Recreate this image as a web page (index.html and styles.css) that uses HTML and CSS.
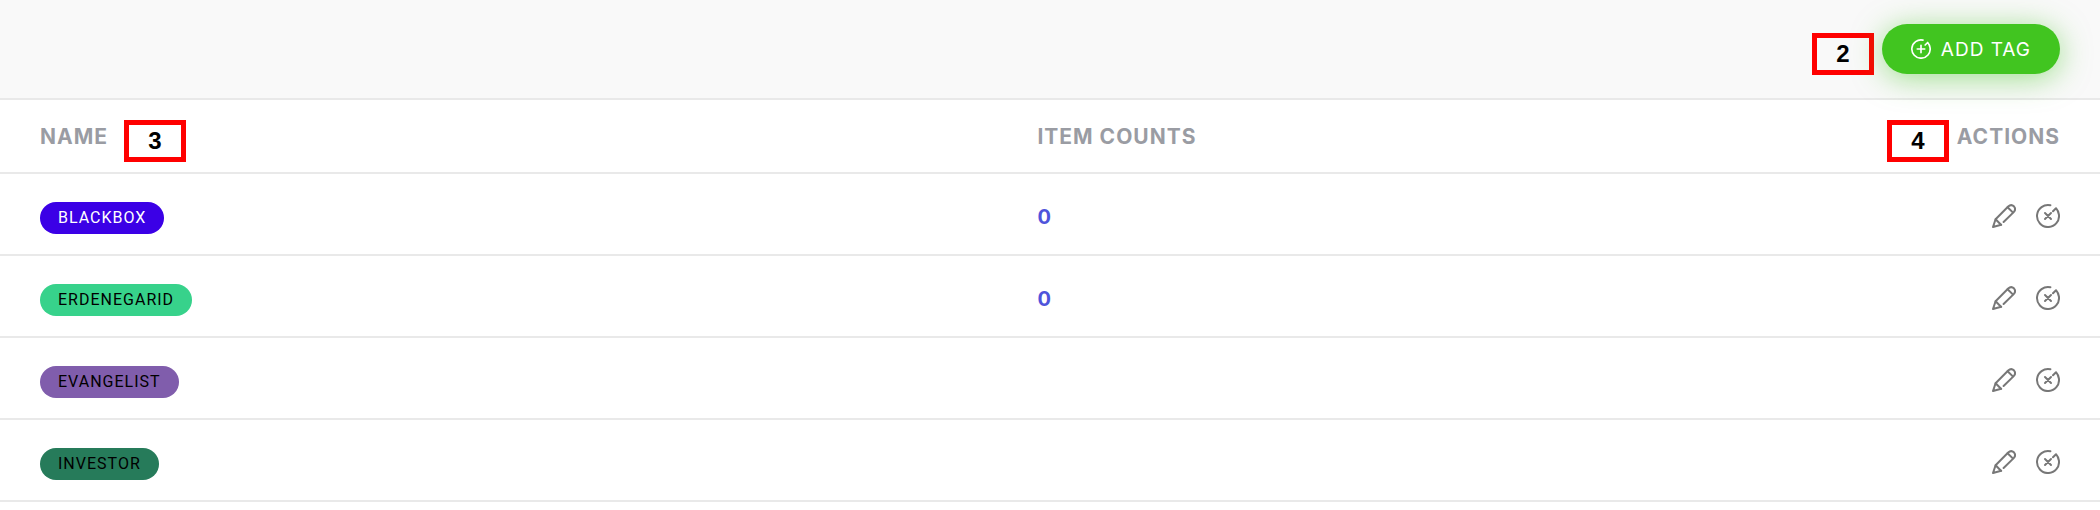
FILE: index.html
```html
<!DOCTYPE html>
<html lang="en">
<head>
  <meta charset="UTF-8">
  <meta name="viewport" content="width=device-width, initial-scale=1.0">
  <title>Tags</title>
  <link rel="stylesheet" href="styles.css">
</head>
<body>
  <svg class="sprite" aria-hidden="true">
    <symbol id="icon-add" viewBox="0 0 24 24">
      <path d="M14.4 1.3A11 11 0 1 0 22.9 10.5Q22.3 6.8 20 4.2L17 7.2" />
      <path d="M12 7.5v9M7.5 12h9" />
    </symbol>
    <symbol id="icon-edit" viewBox="0 0 24 24">
      <path d="M9.2 20.8L1 23l2.6-7.8L16.2 2.5Q19.2-.2 21.9 2.3Q24.4 5.2 21.7 8.1L11.6 18" />
      <path d="M15.6 3.2l5.2 5.2M3.6 15.2l5.4 5.6" />
    </symbol>
    <symbol id="icon-cancel" viewBox="0 0 24 24">
      <path d="M14.4 1.3A11 11 0 1 0 22.9 10.5Q22.3 6.8 20 4.2L17 7.2" />
      <path d="M9 9l6 6M15 9l-6 6" />
    </symbol>
  </svg>
  <header class="toolbar">
    <span class="marker">2</span>
    <button type="button" class="add-button">
      <svg class="add-icon" aria-hidden="true"><use href="#icon-add" /></svg>
      ADD TAG
    </button>
  </header>
  <main>
    <table class="tags">
      <thead>
        <tr>
          <th class="name"><div class="heading">NAME <span class="marker spaced">3</span></div></th>
          <th>ITEM COUNTS</th>
          <th class="actions"><div class="heading end"><span class="marker">4</span> ACTIONS</div></th>
        </tr>
      </thead>
      <tbody>
        <tr>
          <td class="name"><span class="tag blackbox">BLACKBOX</span></td>
          <td class="count">0</td>
          <td class="actions">
            <div class="buttons">
              <button type="button" aria-label="Edit"><svg><use href="#icon-edit" /></svg></button>
              <button type="button" aria-label="Delete"><svg><use href="#icon-cancel" /></svg></button>
            </div>
          </td>
        </tr>
        <tr>
          <td class="name"><span class="tag erdenegarid">ERDENEGARID</span></td>
          <td class="count">0</td>
          <td class="actions">
            <div class="buttons">
              <button type="button" aria-label="Edit"><svg><use href="#icon-edit" /></svg></button>
              <button type="button" aria-label="Delete"><svg><use href="#icon-cancel" /></svg></button>
            </div>
          </td>
        </tr>
        <tr>
          <td class="name"><span class="tag evangelist">EVANGELIST</span></td>
          <td class="count"></td>
          <td class="actions">
            <div class="buttons">
              <button type="button" aria-label="Edit"><svg><use href="#icon-edit" /></svg></button>
              <button type="button" aria-label="Delete"><svg><use href="#icon-cancel" /></svg></button>
            </div>
          </td>
        </tr>
        <tr>
          <td class="name"><span class="tag investor">INVESTOR</span></td>
          <td class="count"></td>
          <td class="actions">
            <div class="buttons">
              <button type="button" aria-label="Edit"><svg><use href="#icon-edit" /></svg></button>
              <button type="button" aria-label="Delete"><svg><use href="#icon-cancel" /></svg></button>
            </div>
          </td>
        </tr>
      </tbody>
    </table>
  </main>
</body>
</html>
```
FILE: styles.css
```css
* { box-sizing: border-box; }

body {
  margin: 0;
  background-color: #fff;
  font-family: Inter, sans-serif;
}

button {
  padding: 0;
  border: none;
  background: none;
  color: inherit;
  font-family: inherit;
  cursor: pointer;
}

svg {
  display: block;
  overflow: visible;
  fill: none;
  stroke: currentColor;
  stroke-linecap: round;
  stroke-linejoin: round;
}

.sprite {
  position: absolute;
  width: 0;
  height: 0;
}

.toolbar {
  display: flex;
  justify-content: flex-end;
  align-items: center;
  gap: 8px;
  padding: 23px 40px;
  background-color: #f9f9f9;
  border-bottom: 2px solid #e9e9e9;
}

.add-button {
  display: flex;
  align-items: center;
  gap: 10px;
  height: 50px;
  padding: 0 29px;
  border-radius: 25px;
  background-color: #41c520;
  box-shadow: 0 4px 30px rgba(65, 197, 32, 0.5);
  color: #fff;
  font-size: 19px;
  letter-spacing: 1px;
}

.add-icon {
  width: 20px;
  height: 20px;
  stroke-width: 2;
}

.marker {
  width: 62px;
  height: 42px;
  margin-top: 10px;
  border: 5px solid #f00;
  color: #000;
  font: bold 24px/32px "Liberation Sans", sans-serif;
  letter-spacing: 0;
  text-align: center;
}

.spaced {
  margin-left: 8px;
}

.tags {
  width: 100%;
  border-collapse: separate;
  border-spacing: 0;
  table-layout: fixed;
}

th, td {
  padding: 0;
  border-bottom: 2px solid #e9e9e9;
  text-align: left;
}

th {
  height: 74px;
  color: #9a9ca3;
  font-size: 21px;
  font-weight: 700;
  letter-spacing: 1px;
}

td {
  height: 82px;
}

.name {
  width: 49.4%;
  padding-left: 40px;
}

.actions {
  width: 20%;
  padding-right: 40px;
}

.heading {
  display: flex;
  align-items: center;
  gap: 8px;
}

.end {
  justify-content: flex-end;
}

.tag {
  display: block;
  width: fit-content;
  margin-top: 8px;
  padding: 0 18px;
  border-radius: 16px;
  color: #000;
  font-family: Roboto, sans-serif;
  font-size: 16px;
  line-height: 32px;
  letter-spacing: 1px;
}

.blackbox {
  background-color: #3b00e6;
  color: #fff;
}

.erdenegarid { background-color: #37d28b; }
.evangelist { background-color: #805dac; }
.investor { background-color: #267b5a; }

.count {
  padding-top: 6px;
  color: #4f54db;
  font-size: 20px;
  font-weight: 700;
}

.buttons {
  display: flex;
  justify-content: flex-end;
  gap: 20px;
  margin-top: 4px;
  color: #777;
}

.buttons svg {
  width: 24px;
  height: 24px;
  stroke-width: 2;
}
```
